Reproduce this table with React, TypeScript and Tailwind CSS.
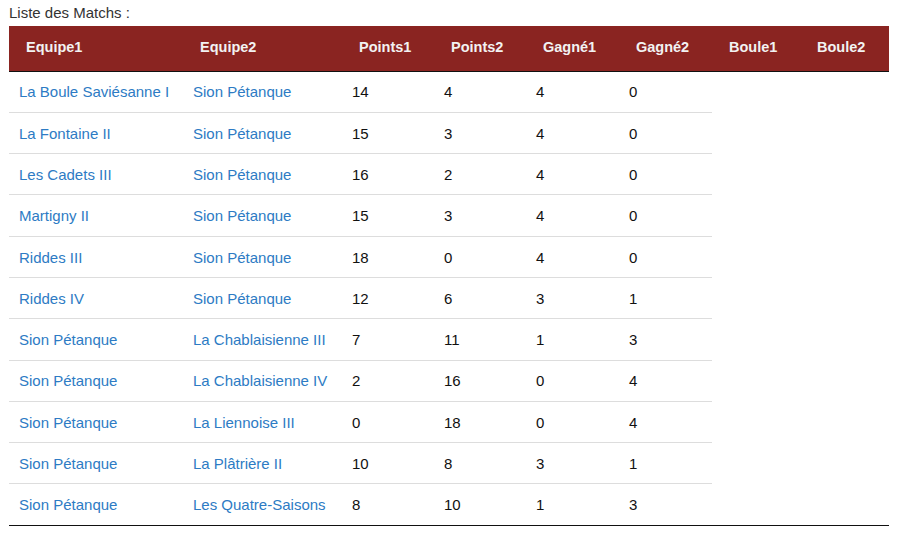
const matchs = [
  ['La Boule Saviésanne I', 'Sion Pétanque', 14, 4, 4, 0],
  ['La Fontaine II', 'Sion Pétanque', 15, 3, 4, 0],
  ['Les Cadets III', 'Sion Pétanque', 16, 2, 4, 0],
  ['Martigny II', 'Sion Pétanque', 15, 3, 4, 0],
  ['Riddes III', 'Sion Pétanque', 18, 0, 4, 0],
  ['Riddes IV', 'Sion Pétanque', 12, 6, 3, 1],
  ['Sion Pétanque', 'La Chablaisienne III', 7, 11, 1, 3],
  ['Sion Pétanque', 'La Chablaisienne IV', 2, 16, 0, 4],
  ['Sion Pétanque', 'La Liennoise III', 0, 18, 0, 4],
  ['Sion Pétanque', 'La Plâtrière II', 10, 8, 3, 1],
  ['Sion Pétanque', 'Les Quatre-Saisons', 8, 10, 1, 3],
] as const

const headers = ['Equipe1', 'Equipe2', 'Points1', 'Points2', 'Gagné1', 'Gagné2', 'Boule1', 'Boule2']
const widths = [174, 159, 92, 92, 93, 93, 88, 89]

export default function App() {
  return (
    <div className="min-h-[537px] bg-white px-[9px] pt-[4px] font-['Liberation_Sans',Arial,sans-serif] text-[15px] text-[#333]">
      <div className="leading-[18px]">Liste des Matchs :</div>
      <table className="mt-[4px] w-[880px] table-fixed border-collapse border-b border-[#111]">
        <colgroup>
          {widths.map((w, i) => (
            <col key={i} style={{ width: w }} />
          ))}
        </colgroup>
        <thead>
          <tr className="h-[45px] bg-[#8a2421] border-b border-[#111]">
            {headers.map((h) => (
              <th key={h} className="px-[17px] text-left text-[14.5px] font-bold text-[#f2f2f2]">
                {h}
              </th>
            ))}
          </tr>
        </thead>
        <tbody>
          {matchs.map((m, i) => (
            <tr key={i} className="h-[41.3px]">
              {m.map((v, j) => (
                <td
                  key={j}
                  className={
                    (i > 0 ? 'border-t border-[#ddd] ' : '') +
                    'px-[10px] pt-[2px] pb-0 whitespace-nowrap ' +
                    (j < 2 ? 'text-[#2d7bc4]' : 'text-[#111]')
                  }
                >
                  {v}
                </td>
              ))}
            </tr>
          ))}
        </tbody>
      </table>
    </div>
  )
}
